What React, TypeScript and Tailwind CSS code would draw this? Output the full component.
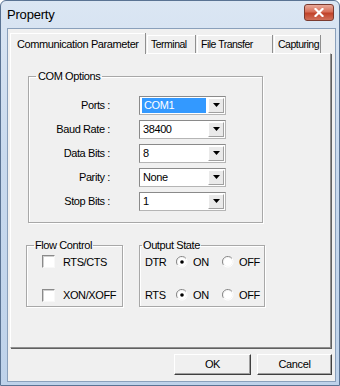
import React from "react";

const font = { fontFamily: '"Liberation Sans", Arial, sans-serif' };

function Combo({ value, selected }: { value: string; selected?: boolean }) {
  return (
    <div className="flex h-[19px] w-[87px] border border-t-[#8a8a8a] border-l-[#8a8a8a] border-r-[#b5b5b5] border-b-[#b5b5b5] bg-white">
      <div className="flex flex-1 items-center pl-[2px] pr-[1px] py-[1px]">
        <div
          className={
            selected
              ? "flex h-full w-full items-center bg-[#3399ff] pl-[2px] text-white"
              : "flex h-full w-full items-center pl-[1px] text-black"
          }
        >
          {value}
        </div>
      </div>
      <div className="m-[1px] flex w-[16px] items-center justify-center border border-t-white border-l-white border-r-[#a0a0a0] border-b-[#a0a0a0] bg-[#eaeaea]">
        <svg width="7" height="4" viewBox="0 0 7 4">
          <path d="M0 0H7L3.5 4Z" fill="#000" />
        </svg>
      </div>
    </div>
  );
}

function Check({ label }: { label: string }) {
  return (
    <div className="flex items-center gap-[8px]">
      <div className="h-[13px] w-[13px] border border-t-[#8a8a8a] border-l-[#8a8a8a] border-r-[#f8f8f8] border-b-[#f8f8f8] bg-white shadow-[inset_1px_1px_0_#d0d0d0]" />
      <span>{label}</span>
    </div>
  );
}

function Radio({ label, on }: { label: string; on?: boolean }) {
  return (
    <div className="flex items-center gap-[5px]">
      <svg width="12" height="12" viewBox="0 0 12 12">
        <path d="M10 2.5A5 5 0 0 0 1.5 9" stroke="#8a8a8a" strokeWidth="1" fill="none" />
        <path d="M1.5 9A5 5 0 0 0 10 2.5" stroke="#ffffff" strokeWidth="1" fill="none" />
        <circle cx="6" cy="6" r="4" fill="#ffffff" />
        {on && <circle cx="6" cy="6" r="1.8" fill="#000" />}
      </svg>
      <span>{label}</span>
    </div>
  );
}

const tabCls =
  "ml-[2px] flex h-[18px] items-center whitespace-nowrap border-l border-t border-white pl-[3px] shadow-[1px_0_0_#8f8f8f] text-[10.5px] tracking-[-0.5px]";

export default function App() {
  const rows: [string, string, boolean?][] = [
    ["Ports :", "COM1", true],
    ["Baud Rate :", "38400"],
    ["Data Bits :", "8"],
    ["Parity :", "None"],
    ["Stop Bits :", "1"],
  ];
  return (
    <div
      className="flex h-[386px] w-[340px] flex-col overflow-hidden rounded-t-[6px] border border-[#5a7393] bg-[linear-gradient(180deg,#dbe6f3_0%,#c9daee_40%,#bed2ea_100%)] text-[11px] tracking-[-0.4px] text-black"
      style={font}
    >
      {/* title bar */}
      <div className="flex h-[27px] shrink-0 items-start justify-between pl-[6px] pr-[5px] pt-[4px]">
        <span className="text-[13px] tracking-[-0.2px] text-black">Property</span>
        <div className="mt-[-1px] flex h-[17px] w-[30px] items-center justify-center rounded-[3px] border border-[#7a3a2f] bg-[linear-gradient(180deg,#e9a99a_0%,#d7705a_45%,#c1432a_55%,#d0705a_100%)]">
          <svg width="10" height="9" viewBox="0 0 10 9">
            <path d="M1.5 1L8.5 8M8.5 1L1.5 8" stroke="#ffffff" strokeWidth="2.2" strokeLinecap="square" />
          </svg>
        </div>
      </div>
      {/* client area */}
      <div className="mb-[3px] ml-[6px] mr-[3px] flex flex-1 flex-col border border-[#8aa0bb] bg-[#f0f0f0] px-[2px] pt-[4px]">
        {/* tabs */}
        <div className="flex h-[20px] items-end">
          <div className="relative z-10 mb-[-1px] flex h-[21px] w-[135px] items-center whitespace-nowrap border-l border-t border-white bg-[#f0f0f0] pl-[6px] shadow-[1px_0_0_#8f8f8f]">
            Communication Parameter
          </div>
          <div className={tabCls + " w-[48px]"}>Terminal</div>
          <div className={tabCls + " w-[75px]"}>File Transfer</div>
          <div className={tabCls + " w-[46px]"}>Capturing</div>
        </div>
        {/* panel */}
        <div className="flex h-[295px] w-[321px] flex-col border border-l-white border-t-white border-r-[#8f8f8f] border-b-[#8f8f8f] shadow-[1px_1px_0_#606060]">
          <fieldset className="ml-[17px] mt-[14px] h-[155px] w-[235px] border border-[#a8a8a8] shadow-[inset_1px_1px_0_#fff,1px_1px_0_#fff]">
            <legend className="ml-[7px] px-[2px]">COM Options</legend>
            <div className="mt-[11px] flex flex-col gap-[5px]">
              {rows.map(([l, v, s]) => (
                <div key={l} className="flex items-center">
                  <div className="w-[81px] text-right">{l}</div>
                  <div className="ml-[29px]">
                    <Combo value={v} selected={!!s} />
                  </div>
                </div>
              ))}
            </div>
          </fieldset>
          <div className="mt-[14px] flex">
            <fieldset className="ml-[15px] h-[70px] w-[97px] border border-[#a8a8a8] shadow-[inset_1px_1px_0_#fff,1px_1px_0_#fff]">
              <legend className="ml-[7px] px-[1px]">Flow Control</legend>
              <div className="ml-[15px] mt-0 flex flex-col gap-[17px]">
                <Check label="RTS/CTS" />
                <Check label="XON/XOFF" />
              </div>
            </fieldset>
            <fieldset className="ml-[16px] h-[70px] w-[126px] border border-[#a8a8a8] shadow-[inset_1px_1px_0_#fff,1px_1px_0_#fff]">
              <legend className="ml-[2px] px-[1px]">Output State</legend>
              <div className="ml-[5px] mt-0 flex flex-col gap-[17px]">
                <div className="flex items-center">
                  <span className="w-[31px]">DTR</span>
                  <div className="w-[46px]"><Radio label="ON" on /></div>
                  <Radio label="OFF" />
                </div>
                <div className="flex items-center">
                  <span className="w-[31px]">RTS</span>
                  <div className="w-[46px]"><Radio label="ON" on /></div>
                  <Radio label="OFF" />
                </div>
              </div>
            </fieldset>
          </div>
        </div>
        {/* buttons */}
        <div className="mt-[6px] flex justify-end gap-[6px] pr-[1px]">
          <button className="h-[21px] w-[77px] border border-t-white border-l-white border-r-[#404040] border-b-[#404040] bg-[#f0f0f0] shadow-[inset_-1px_-1px_0_#a0a0a0]">
            OK
          </button>
          <button className="h-[21px] w-[75px] border border-t-white border-l-white border-r-[#404040] border-b-[#404040] bg-[#f0f0f0] shadow-[inset_-1px_-1px_0_#a0a0a0]">
            Cancel
          </button>
        </div>
      </div>
    </div>
  );
}
